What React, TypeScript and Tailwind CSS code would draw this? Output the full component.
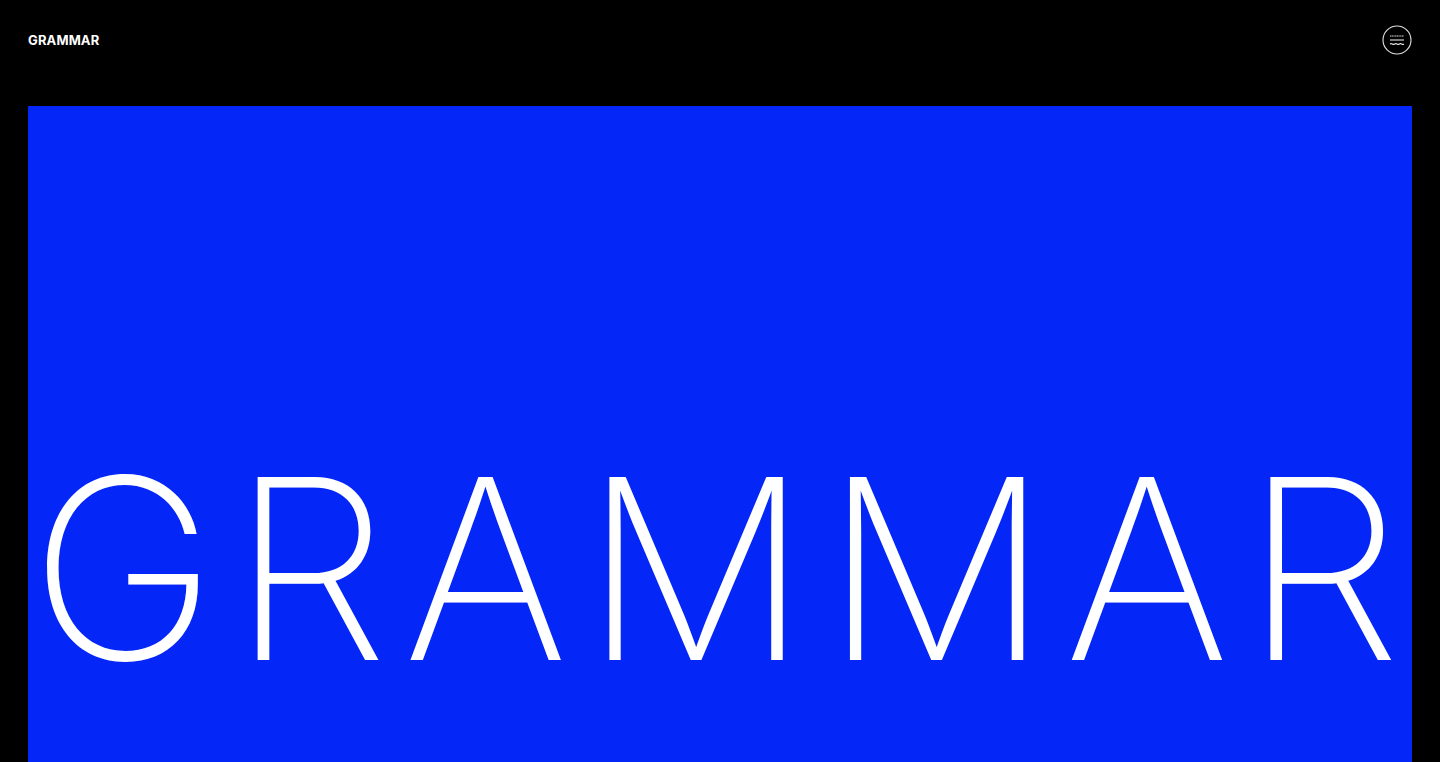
const MenuIcon = () => (
  <svg width="30" height="30" viewBox="0 0 30 30" fill="none" stroke="#e5e5e5" strokeWidth="1.1">
    <circle cx="15" cy="15" r="14" />
    <line x1="8" y1="11" x2="22" y2="11" strokeDasharray="1.2 0.5" />
    <line x1="8" y1="15" x2="22" y2="15" />
    <path d="M8 19 q1.17 -0.8 2.33 0 t2.33 0 t2.33 0 t2.33 0 t2.33 0 t2.33 0" />
  </svg>
)

export default function App() {
  return (
    <div className="min-h-screen bg-black text-white">
      <header className="flex h-[106px] items-start justify-between px-7 pt-[25px]">
        <a href="#" className="mt-[9px] font-['Inter',sans-serif] text-[13px] font-bold leading-none tracking-[0.01em] text-white">
          GRAMMAR
        </a>
        <button className="flex size-[30px] items-center justify-center">
          <MenuIcon />
        </button>
      </header>

      <main className="px-7">
        <section className="flex h-[656px] flex-col overflow-hidden bg-[#0426f6]">
          <h1 className="mt-[337px] whitespace-nowrap pl-[2px] text-left font-['Inter',sans-serif] text-[252px] font-extralight leading-[252px] tracking-[14.5px] text-white">
            GRAMMA<span className="tracking-normal">R</span>
          </h1>
        </section>
      </main>
    </div>
  )
}
